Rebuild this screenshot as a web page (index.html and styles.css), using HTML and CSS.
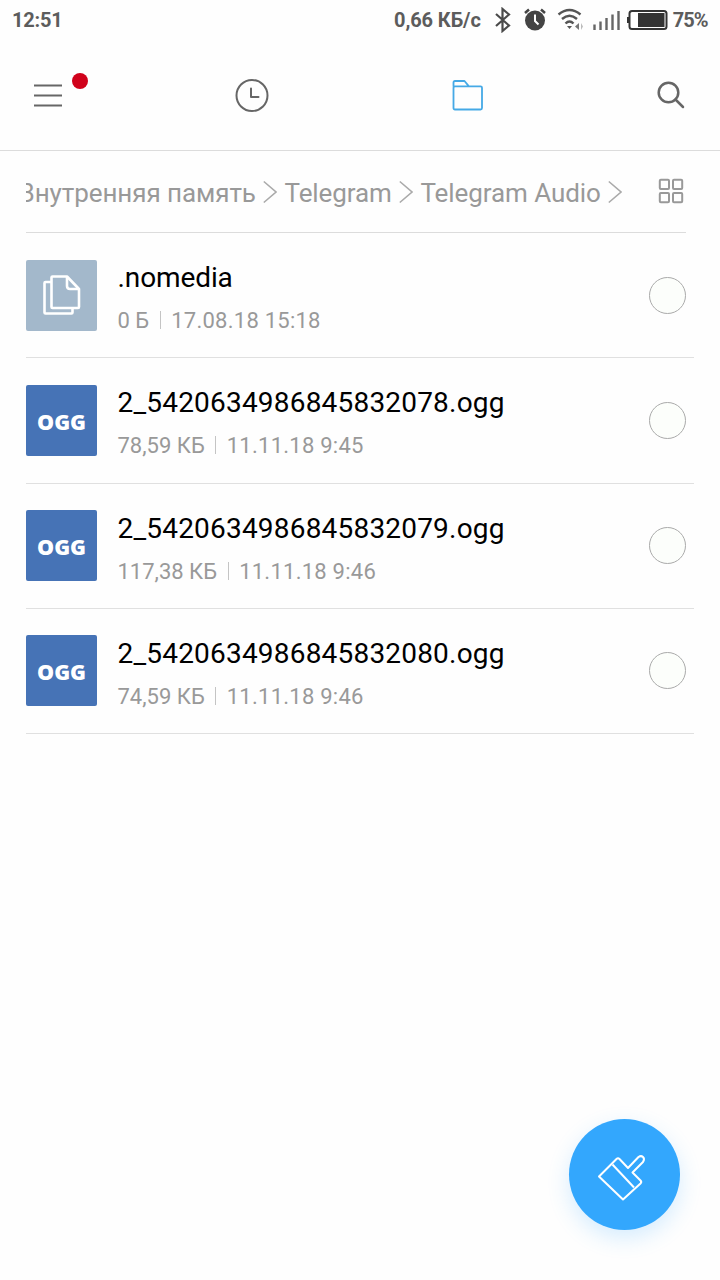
FILE: index.html
```html
<!DOCTYPE html>
<html lang="ru">
<head>
  <meta charset="UTF-8" />
  <title>Проводник</title>
  <meta name="viewport" content="width=device-width, initial-scale=1.0" />
  <link rel="stylesheet" href="styles.css">
</head>
<body>

<div class="status-bar">
  <span class="time">12:51</span>
  <span class="speed">0,66 КБ/с</span>
  <svg class="bluetooth" width="16" height="26" viewBox="0 0 16 26"><path d="M1 7l13 11.5-6.500 5.500V2L14 7.500 1 19" /></svg>
  <svg class="alarm" width="22" height="24" viewBox="0 0 22 24">
    <circle cx="11" cy="12.500" r="10" fill="#444" />
    <path d="M1 5l4-3.500M21 5l-4-3.500" stroke="#444" stroke-width="2.500" />
    <path d="M11 6.500v6.500l3.500 3.500" stroke="#fff" stroke-width="2" />
  </svg>
  <svg class="wifi" width="26" height="24" viewBox="0 0 26 24">
    <path d="M1.500 6.500Q12.500-2.500 23.500 6.500M5 11Q12.500 4.500 20 11M8.500 15.500Q12.500 11.500 16.500 15.500" stroke="#555" stroke-width="2.400" />
    <path d="M10 18h5l-2.500 3z" fill="#555" />
    <path d="M22 15v7l-4-3.500z" fill="#777" />
    <path d="M24 15v7l2-3.500z" fill="#bbb" />
  </svg>
  <svg class="signal" width="27" height="20" viewBox="0 0 27 20"><path d="M1.500 14.500V20M7.500 11.500V20M13.500 8V20M19.500 4.500V20M25.500 1V20" /></svg>
  <svg class="battery" width="41" height="22" viewBox="0 0 41 22">
    <rect x="2.500" y="2" width="37" height="18" rx="2.500" stroke="#333" stroke-width="2" />
    <path d="M1 8v6" stroke="#333" stroke-width="2" />
    <rect x="11" y="4" width="26.500" height="14" fill="#333" />
  </svg>
  <span class="percent">75%</span>
</div>

<div class="nav-bar">
  <div class="nav-menu">
    <svg width="28" height="26" viewBox="0 0 28 26"><path d="M0.500 3.500h27M0.500 13.500h27M0.500 23.500h27" /></svg>
    <span class="dot"></span>
  </div>
  <div class="nav-tab">
    <svg width="34" height="34" viewBox="0 0 34 34"><circle cx="17" cy="17.500" r="15.500" /><path d="M16 10.500v8.500h7.500" /></svg>
  </div>
  <div class="nav-tab active">
    <svg width="34" height="34" viewBox="0 0 34 34"><path d="M2.500 8.300V4.500q0-1.500 1.500-1.500h9.500l4 4.800M4 8.300h25.500q1.500 0 1.500 1.500V30q0 1.500-1.500 1.500h-25.500q-1.500 0-1.500-1.500V9.800q0-1.500 1.500-1.500z" /></svg>
  </div>
  <div class="nav-search">
    <svg width="28" height="28" viewBox="0 0 28 28"><circle cx="11.500" cy="11.500" r="9.800" /><path d="M18.500 18.500l7.500 7.500" /></svg>
  </div>
</div>

<div class="path-bar">
  <div class="crumbs">
    <span class="crumb">Внутренняя память</span>
    <svg class="arrow" width="14" height="24" viewBox="0 0 14 24"><path d="M0.800 1.500L13 12 0.800 22.500" /></svg>
    <span class="crumb">Telegram</span>
    <svg class="arrow" width="14" height="24" viewBox="0 0 14 24"><path d="M0.800 1.500L13 12 0.800 22.500" /></svg>
    <span class="crumb">Telegram Audio</span>
    <svg class="arrow" width="14" height="24" viewBox="0 0 14 24"><path d="M0.800 1.500L13 12 0.800 22.500" /></svg>
  </div>
  <svg class="grid-icon" width="26" height="26" viewBox="0 0 26 26">
    <rect x="1.800" y="1.800" width="9.200" height="9.200" rx="1" />
    <rect x="15" y="1.800" width="9.200" height="9.200" rx="1" />
    <rect x="1.800" y="15" width="9.200" height="9.200" rx="1" />
    <rect x="15" y="15" width="9.200" height="9.200" rx="1" />
  </svg>
</div>

<div class="file-list">
  <div class="file">
    <div class="thumb doc">
      <svg width="38" height="40" viewBox="0 0 38 40">
        <path d="M8 7H2.500q-1 0-1 1V37.500q0 1 1 1h26q1 0 1-1v-4.500" />
        <path d="M9.500 1.500h14.500l12 12.500v18q0 1-1 1H9.500q-1 0-1-1V2.500q0-1 1-1z" />
        <path d="M24 1.500v9.500q0 3 3 3h9" />
      </svg>
    </div>
    <div class="info">
      <div class="name short">.nomedia</div>
      <div class="meta"><span>0 Б</span><i class="sep"></i><span class="date">17.08.18 15:18</span></div>
    </div>
    <div class="check"></div>
  </div>
  <div class="file">
    <div class="thumb">OGG</div>
    <div class="info">
      <div class="name">2_5420634986845832078.ogg</div>
      <div class="meta"><span>78,59 КБ</span><i class="sep"></i><span class="date">11.11.18 9:45</span></div>
    </div>
    <div class="check"></div>
  </div>
  <div class="file">
    <div class="thumb">OGG</div>
    <div class="info">
      <div class="name">2_5420634986845832079.ogg</div>
      <div class="meta"><span>117,38 КБ</span><i class="sep"></i><span class="date">11.11.18 9:46</span></div>
    </div>
    <div class="check"></div>
  </div>
  <div class="file">
    <div class="thumb">OGG</div>
    <div class="info">
      <div class="name">2_5420634986845832080.ogg</div>
      <div class="meta"><span>74,59 КБ</span><i class="sep"></i><span class="date">11.11.18 9:46</span></div>
    </div>
    <div class="check"></div>
  </div>
</div>

<div class="clean-btn">
  <svg width="50" height="50" viewBox="0 0 50 50">
    <path d="M2 25.500L19.500 8q1.500-1.500 3 0l8.500 9L41.500 6q2.500-1.800 4.500 0t0 5L35.500 21.500l8 8q1.500 1.500 0 3L26 48.500z" />
    <path d="M15.500 13.500L37 36.500" />
  </svg>
</div>

</body>
</html>
```

FILE: styles.css
```css
* { box-sizing: border-box; }
body { margin: 0; height: 1280px; background: #fefefe; font-family: Roboto, "Noto Sans", sans-serif; overflow: hidden; }
svg { display: block; flex: none; fill: none; }

/* status bar */
.status-bar { display: flex; align-items: center; height: 40px; padding: 0 12px; font-size: 20px; font-weight: bold; color: #5c5c5c; white-space: nowrap; }
.time { letter-spacing: -0.2px; }
.speed { margin-left: auto; letter-spacing: -0.1px; }
.bluetooth { margin-left: 14px; stroke: #4a4a4a; stroke-width: 2.2; }
.alarm { margin-left: 13px; }
.wifi { margin-left: 11px; }
.signal { margin-left: 10px; stroke: #666; stroke-width: 2.4; }
.battery { margin-left: 7px; }
.percent { margin-left: 5px; margin-right: 0.5px; letter-spacing: -1px; }

/* top tabs */
.nav-bar { display: flex; align-items: center; height: 111px; border-bottom: 1px solid #dcdcdc; }
.nav-bar svg { stroke: #666; stroke-width: 2; stroke-linecap: round; stroke-linejoin: round; }
.nav-menu { position: relative; width: 144px; padding-left: 34px; }
.dot { position: absolute; left: 72px; top: -9px; width: 16px; height: 16px; border-radius: 50%; background: #d0021b; }
.nav-tab { display: flex; justify-content: center; width: 216px; }
.nav-tab.active svg { stroke: #45a9e6; stroke-width: 1.8; }
.nav-search { display: flex; justify-content: flex-end; width: 144px; padding-right: 35px; }
.nav-search svg { stroke-width: 2.5; }

/* path */
.path-bar { display: flex; align-items: center; height: 82px; margin: 0 34px 0 26px; border-bottom: 1px solid #dcdcdc; }
.crumbs { display: flex; justify-content: flex-end; align-items: center; width: 596px; overflow: hidden; color: #999; font-size: 26px; letter-spacing: -0.08px; white-space: nowrap; }
.crumb { flex: none; margin-top: 2px; }
.arrow { margin: 0 7.3px; stroke: #aaa; stroke-width: 1.6; }
.arrow:last-child { margin-right: 0; }
.grid-icon { margin: 0 2.5px 1px auto; stroke: #999; stroke-width: 2; }

/* files */
.file-list { margin: 0 26px; }
.file { display: flex; align-items: center; height: 125.25px; padding-right: 8px; border-bottom: 1px solid #e0e0e0; }
.thumb { display: flex; align-items: center; justify-content: center; width: 71px; height: 71px; padding-top: 2px; border-radius: 2px; background: #4673b6; color: #fff; font-family: "Open Sans", sans-serif; font-size: 21.5px; font-weight: 800; }
.thumb.doc { padding: 0; background: #a3b8cb; }
.thumb svg { stroke: #fff; stroke-width: 2.6; stroke-linejoin: round; }
.info { flex: 1; padding: 6px 0 0 20.5px; }
.name { font-size: 28px; line-height: 36px; color: #000; letter-spacing: 0.2px; }
.name.short { letter-spacing: -0.1px; }
.meta { display: flex; align-items: center; margin-top: 10px; font-size: 22px; line-height: 30px; color: #999; }
.date { letter-spacing: 0.25px; }
.sep { width: 1px; height: 18px; margin: -2px 10.5px 0 10.5px; background: #c4c4c4; }
.check { width: 37px; height: 37px; border: 1px solid #aaa; border-radius: 50%; background: #fcfefb; }

/* floating button */
.clean-btn { position: absolute; right: 40px; bottom: 50px; display: flex; align-items: center; justify-content: center; width: 111px; height: 111px; padding: 2px 5px 0 0; border-radius: 50%; background: #33a7fd; box-shadow: 0 8px 22px rgba(51,167,253,0.2); }
.clean-btn svg { stroke: #fff; stroke-width: 2; stroke-linejoin: round; }
```
